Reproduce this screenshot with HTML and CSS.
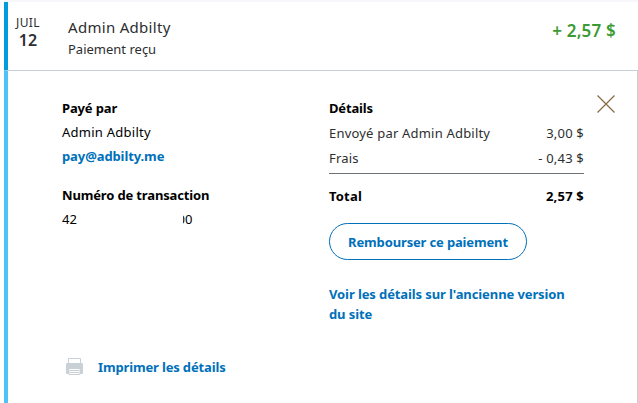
FILE: index.html
```
<!DOCTYPE html>
<html lang="fr">

<head>
  <meta charset="UTF-8">
  <meta name="viewport" content="width=device-width, initial-scale=1.0">
  <title>Paiement reçu</title>
  <link rel="stylesheet" href="styles.css">
</head>

<body>
  <div class="transaction">
    <div class="summary">
      <div class="date">
        <span class="month">JUIL</span>
        <span class="day">12</span>
      </div>
      <div class="description">
        <div class="name">Admin Adbilty</div>
        <div class="type">Paiement reçu</div>
      </div>
      <div class="amount">+ 2,57 $</div>
    </div>

    <div class="panel">
      <div class="payer">
        <div class="title payer-title">Payé par</div>
        <div class="payer-name">Admin Adbilty</div>
        <div><a class="link email" href="#">pay@adbilty.me</a></div>
        <div class="title transaction-title">Numéro de transaction</div>
        <div class="transaction-id">
          <span>42</span>
          <span class="id-end"><span class="id-cut">0</span>0</span>
        </div>
        <a class="link print" href="#">
          <svg class="printer" width="18" height="18" viewBox="0 0 18 18">
            <path d="M2.5 6V.5h12V6" fill="#fff" stroke="#c9d1d6" />
            <path d="M1 5h15q1 0 1 1v9q0 1-1 1H1q-1 0-1-1V6q0-1 1-1z" fill="#c9d1d6" />
            <path d="M3 10.500h11v6H3z" fill="#fff" stroke="#c9d1d6" />
            <path d="M4 12.500h9M4 14.500h9" stroke="#c9d1d6" />
          </svg>
          <span>Imprimer les détails</span>
        </a>
      </div>

      <div class="details">
        <div class="title details-title">Détails</div>
        <div class="line"><span class="sent">Envoyé par Admin Adbilty</span><span>3,00 $</span></div>
        <div class="line"><span>Frais</span><span>- 0,43 $</span></div>
        <div class="line total"><span>Total</span><span>2,57 $</span></div>
        <button class="refund">Rembourser ce paiement</button>
        <a class="link classic" href="#">Voir les détails sur l'ancienne version<br>du site</a>
      </div>

      <svg class="close" width="18" height="18" viewBox="0 0 18 18">
        <path d="M.5.5l17 17M17.5.5l-17 17" fill="none" stroke="#8a6a45" stroke-width="1.2" />
      </svg>
    </div>
  </div>
</body>

</html>
```

FILE: styles.css
```
* {
  box-sizing: border-box;
}

body {
  margin: 0;
  height: 403px;
  overflow: hidden;
  background: #fff;
  font-family: "Noto Sans", sans-serif;
  font-size: 13px;
  line-height: 24px;
  color: #000;
}

.transaction {
  margin-left: 4px;
  border-top: 2px solid #f5f7fa;
}

.summary {
  display: flex;
  height: 68px;
  border-left: 4px solid #009cde;
  color: #2c2e2f;
}

.date {
  display: flex;
  flex-direction: column;
  align-items: center;
  width: 40px;
  padding-top: 12px;
}

.month {
  font-size: 12px;
  line-height: 17px;
  letter-spacing: 0.4px;
}

.day {
  font-size: 16px;
  font-weight: 600;
  line-height: 18px;
}

.description {
  flex: 1;
  padding: 15px 0 0 20px;
}

.name {
  font-size: 15px;
  line-height: 21px;
  letter-spacing: 0.3px;
}

.type {
  line-height: 22px;
}

.amount {
  padding: 17px 22px 0 0;
  font-size: 17px;
  font-weight: 600;
  color: #3d9b35;
  letter-spacing: 0.2px;
}

.panel {
  display: flex;
  height: 333px;
  border-left: 4px solid #4fc3f7;
  border-top: 1px solid #c9d0d4;
  border-right: 1px solid #c9d0d4;
}

.payer {
  width: 321px;
  padding: 25px 0 0 54px;
}

.payer-name {
  letter-spacing: 0.25px;
}

.title {
  font-weight: 700;
  letter-spacing: -0.15px;
}

.link {
  color: #0070ba;
  font-weight: 700;
  letter-spacing: -0.1px;
  text-decoration: none;
}

.transaction-title {
  margin-top: 15px;
}

.transaction-id {
  display: flex;
}

.id-end {
  display: flex;
  margin-left: 106px;
}

/* only the tail of the masked digit stays visible */
.id-cut {
  display: flex;
  justify-content: flex-end;
  width: 2px;
  overflow: hidden;
}

.print {
  display: flex;
  align-items: center;
  gap: 14px;
  margin: 124px 0 0 4px;
  letter-spacing: -0.15px;
}

.printer {
  margin-bottom: 1px;
}

.details {
  width: 255px;
  padding-top: 25px;
  color: #2c2e2f;
}

.details-title {
  padding-bottom: 1px;
  color: #000;
}

.line {
  display: flex;
  justify-content: space-between;
  line-height: 25px;
  letter-spacing: 0.2px;
}

.total {
  margin-top: 2px;
  padding-top: 10px;
  border-top: 1px solid #6c7378;
  color: #000;
  font-weight: 700;
}

.refund {
  display: block;
  width: 198px;
  height: 37px;
  margin-top: 14px;
  padding: 0;
  border: 1px solid #0070ba;
  border-radius: 19px;
  background: #fff;
  color: #0070ba;
  font: 700 13px "Noto Sans", sans-serif;
  letter-spacing: -0.15px;
}

.classic {
  display: block;
  margin-top: 24px;
  line-height: 20px;
  white-space: nowrap;
}

.close {
  margin: 24px 0 0 13px;
}
```
